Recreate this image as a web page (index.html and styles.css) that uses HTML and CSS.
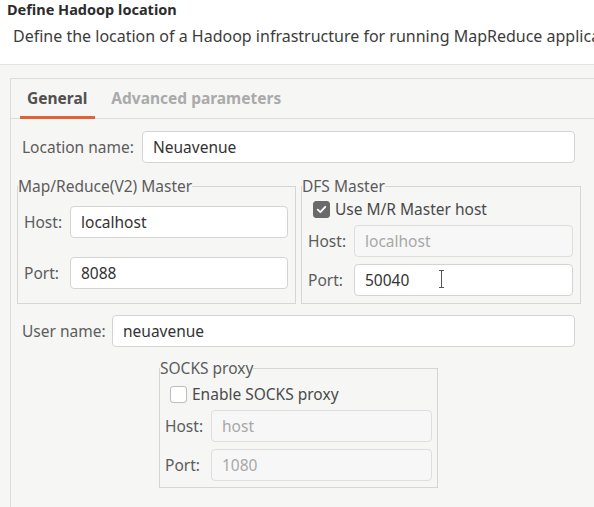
FILE: index.html
```html
<!DOCTYPE html>
<html>
<head>
<meta charset="utf-8">
<link rel="stylesheet" href="styles.css">
</head>
<body>
<div class="header">
  <div class="title">Define Hadoop location</div>
  <div class="desc">Define the location of a Hadoop infrastructure for running MapReduce applications.</div>
</div>
<div class="area">
  <div class="panel">
    <div class="tabs">
      <div class="tab active">General</div>
      <div class="tab">Advanced parameters</div>
    </div>
    <div class="content">
      <div class="row loc">
        <span class="lbl">Location name:</span>
        <div class="inp">Neuavenue</div>
      </div>
      <div class="masters">
        <fieldset class="box mr">
          <legend>Map/Reduce(V2) Master</legend>
          <div class="grid mr-grid">
            <span class="lbl">Host:</span><div class="inp">localhost</div>
            <span class="lbl">Port:</span><div class="inp">8088</div>
          </div>
        </fieldset>
        <fieldset class="box dfs">
          <legend>DFS Master</legend>
          <div class="inner">
            <label class="check"><span class="cb on"><svg viewBox="0 0 18 18" width="18" height="18"><path d="M4.5 9.2 L7.6 12.2 L13.5 5.8" fill="none" stroke="#fff" stroke-width="2.2" stroke-linecap="round" stroke-linejoin="round"/></svg></span>Use M/R Master host</label>
            <div class="grid dfs-grid">
              <span class="lbl">Host:</span><div class="inp dis">localhost</div>
              <span class="lbl">Port:</span><div class="inp">50040<span class="ibeam"></span></div>
            </div>
          </div>
        </fieldset>
      </div>
      <div class="row user">
        <span class="lbl">User name:</span>
        <div class="inp">neuavenue</div>
      </div>
      <fieldset class="box socks">
        <legend>SOCKS proxy</legend>
        <div class="inner">
          <label class="check"><span class="cb"></span>Enable SOCKS proxy</label>
          <div class="grid socks-grid">
            <span class="lbl">Host:</span><div class="inp dis">host</div>
            <span class="lbl">Port:</span><div class="inp dis">1080</div>
          </div>
        </div>
      </fieldset>
    </div>
  </div>
</div>
</body>
</html>
```

FILE: styles.css
```css
html, body {
  margin: 0;
  padding: 0;
}
body {
  width: 594px;
  height: 507px;
  overflow: hidden;
  background: #f6f6f5;
  font-family: "Noto Sans", "DejaVu Sans", sans-serif;
  font-size: 15.5px;
  color: #3a3a3a;
}
.header {
  background: #ffffff;
  height: 64px;
  border-bottom: 1px solid #e4e4e4;
  white-space: nowrap;
  overflow: hidden;
}
.title {
  font-weight: bold;
  font-size: 14.5px;
  color: #2c2c2c;
  padding: 0 0 0 7px;
  line-height: 19px;
}
.desc {
  padding: 6px 0 0 13px;
  font-size: 16px;
  line-height: 22px;
  color: #3c3c3c;
}
.area {
  padding: 13px 0 0 10px;
}
.panel {
  width: 640px;
  height: 440px;
  border-left: 1px solid #dcdcdc;
  border-top: 1px solid #dcdcdc;
}
.tabs {
  display: flex;
  height: 39px;
  border-bottom: 1px solid #dcdcdc;
  padding-left: 9px;
}
.tab {
  font-weight: bold;
  font-size: 15.5px;
  color: #aaaaaa;
  padding: 8px 8px 0 7px;
  margin-right: 9px;
  box-sizing: border-box;
  white-space: nowrap;
}
.tab.active {
  color: #505050;
  border-bottom: 3px solid #e2603a;
  margin-bottom: -1px;
}
.content {
  width: 565px;
  padding: 12px 0 0 6px;
}
.row {
  display: flex;
  align-items: center;
  margin-right: 7px;
}
.lbl {
  color: #5c5c5c;
  white-space: nowrap;
}
.inp {
  position: relative;
  box-sizing: border-box;
  height: 32px;
  border: 1px solid #d4d4d4;
  border-radius: 4px;
  background: #ffffff;
  padding: 0 10px;
  line-height: 30px;
  color: #333333;
  white-space: nowrap;
}
.inp.dis {
  background: #f7f7f7;
  border-color: #dedede;
  color: #a8a8a8;
}
.row .inp {
  flex: 1;
}
.loc .lbl {
  margin-left: 5px;
  width: 120px;
}
.masters {
  display: flex;
  gap: 5px;
  margin-top: 13px;
}
.box {
  margin: 0;
  padding: 0;
  border: 1px solid #d6d6d6;
  min-width: 0;
}
.box legend {
  padding: 0;
  color: #5c5c5c;
  line-height: 20px;
  white-space: nowrap;
}
.mr {
  width: 279px;
  box-sizing: border-box;
}
.dfs {
  width: 280px;
  box-sizing: border-box;
}
.grid {
  display: grid;
  grid-template-columns: 40px 1fr;
  align-items: center;
  column-gap: 6px;
}
.mr-grid {
  padding: 10px 7px 14px 6px;
  row-gap: 19px;
}
.inner {
  padding: 2px 7px 7px 6px;
}
.dfs-grid {
  row-gap: 7px;
  margin-top: 5px;
}
.check {
  display: flex;
  align-items: center;
  gap: 5px;
  color: #4a4a4a;
  margin-left: 5px;
}
.cb {
  box-sizing: border-box;
  width: 17px;
  height: 17px;
  border-radius: 3px;
  border: 1px solid #bdbdbd;
  background: #ffffff;
  display: flex;
  align-items: center;
  justify-content: center;
}
.cb.on {
  background: #6a6a6a;
  border-color: #6a6a6a;
}
.cb svg {
  width: 15px;
  height: 15px;
}
.ibeam {
  position: absolute;
  left: 86px;
  top: 5px;
  width: 1px;
  height: 18px;
  background: #555;
}
.ibeam::before, .ibeam::after {
  content: "";
  position: absolute;
  left: -2px;
  width: 5px;
  height: 1px;
  background: #555;
}
.ibeam::before { top: 0; }
.ibeam::after { bottom: 0; }
.user {
  margin-top: 11px;
}
.user .lbl {
  margin-left: 5px;
  width: 90px;
}
.socks {
  width: 279px;
  box-sizing: border-box;
  margin: 11px 0 0 142px;
}
.socks .inner {
  padding: 5px 5px 6px 5px;
}
.socks .check {
  margin-left: 5px;
}
.socks-grid {
  row-gap: 7px;
  margin-top: 5px;
}
```
